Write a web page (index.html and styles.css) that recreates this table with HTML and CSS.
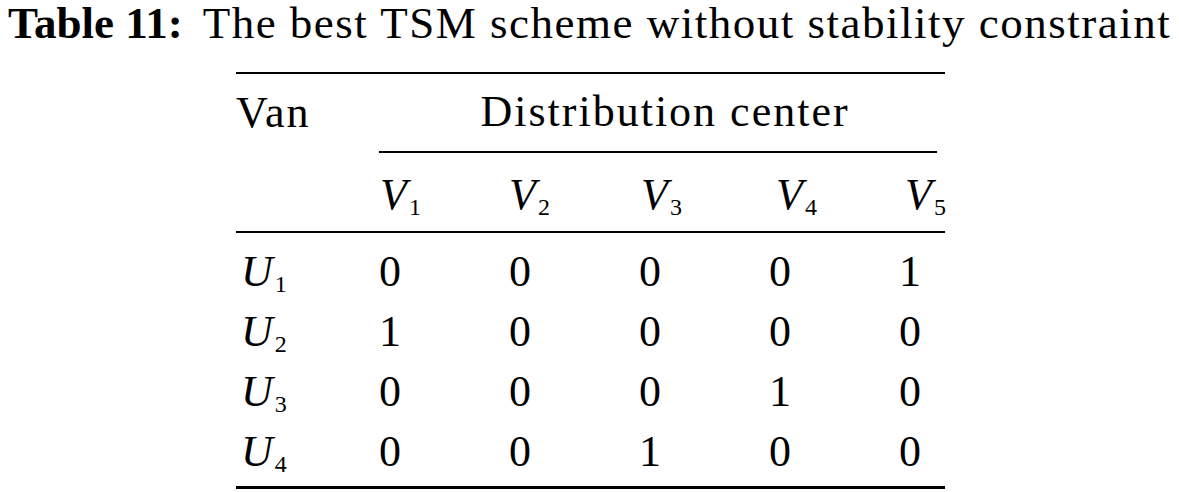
FILE: index.html
```html
<!DOCTYPE html>
<html>
<head>
<meta charset="utf-8">
<link rel="stylesheet" href="styles.css">
</head>
<body>
<div class="caption"><span class="label">Table 11:</span><span class="ctext">The best TSM scheme without stability constraint</span></div>
<table class="tsm">
  <colgroup>
    <col class="c-first">
    <col class="c-mid">
    <col class="c-mid">
    <col class="c-mid">
    <col class="c-mid">
    <col class="c-last">
  </colgroup>
  <thead>
    <tr class="h1">
      <th class="first">Van</th>
      <th colspan="5" class="group"><div class="group-inner">Distribution center</div></th>
    </tr>
    <tr class="h2">
      <th class="first"></th>
      <th class="v1"><i>V</i><sub>1</sub></th>
      <th class="v2"><i>V</i><sub>2</sub></th>
      <th class="v3"><i>V</i><sub>3</sub></th>
      <th class="v4"><i>V</i><sub>4</sub></th>
      <th class="v5"><i>V</i><sub>5</sub></th>
    </tr>
  </thead>
  <tbody>
    <tr><td class="first"><i>U</i><sub>1</sub></td><td>0</td><td>0</td><td>0</td><td>0</td><td>1</td></tr>
    <tr><td class="first"><i>U</i><sub>2</sub></td><td>1</td><td>0</td><td>0</td><td>0</td><td>0</td></tr>
    <tr><td class="first"><i>U</i><sub>3</sub></td><td>0</td><td>0</td><td>0</td><td>1</td><td>0</td></tr>
    <tr class="end"><td class="first"><i>U</i><sub>4</sub></td><td>0</td><td>0</td><td>1</td><td>0</td><td>0</td></tr>
  </tbody>
</table>
</body>
</html>
```
FILE: styles.css
```css
html, body {
  margin: 0;
  padding: 0;
  background: #ffffff;
}
body {
  font-family: "Liberation Serif", "Times New Roman", serif;
  color: #000000;
  width: 1179px;
  height: 492px;
  overflow: hidden;
}
.caption {
  font-size: 45px;
  line-height: 46px;
  padding-left: 8px;
  white-space: nowrap;
}
.label {
  font-weight: bold;
  margin-right: 20px;
}
.ctext {
  letter-spacing: 1.5px;
}
.tsm {
  margin-top: 26px;
  margin-left: 236px;
  width: 709px;
  border-collapse: collapse;
  border-top: 2px solid #000;
  border-bottom: 3px solid #000;
  font-size: 44px;
  letter-spacing: 2px;
  table-layout: fixed;
}
.c-first { width: 141px; }
.c-mid { width: 130px; }
.c-last { width: 48px; }
.tsm th, .tsm td {
  font-weight: normal;
  text-align: left;
  padding: 0;
  white-space: nowrap;
}
.tsm sub {
  font-size: 24px;
  line-height: 0;
  vertical-align: -6px;
  letter-spacing: 0;
}
.tsm i { font-style: italic; }
.tsm .h1 th {
  line-height: 48px;
  padding-top: 14px;
  padding-bottom: 15px;
}
.tsm .h1 th.first { padding-left: 0; }
.tsm .h1 th.group {
  text-align: center;
  padding: 0 8px 0 0;
}
.group-inner {
  padding-top: 14px;
  padding-bottom: 15px;
  border-bottom: 2px solid #000;
  margin-left: 2px;
  padding-left: 14px;
}
.tsm .h2 th {
  line-height: 40px;
  padding-top: 22px;
  padding-bottom: 16px;
  border-bottom: 2px solid #000;
}
.tsm .h2 th.v1 { padding-left: 3px; }
.tsm .h2 th.v2 { padding-left: 2px; }
.tsm .h2 th.v3 { padding-left: 4px; }
.tsm .h2 th.v4 { padding-left: 9px; }
.tsm .h2 th.v5 { padding-left: 8px; }
.tsm tbody td {
  line-height: 40px;
  padding-top: 19px;
  padding-bottom: 1px;
  padding-left: 2px;
}
.tsm tbody tr.end td { padding-bottom: 14px; }
.tsm tbody td.first { padding-left: 5px; }
```
